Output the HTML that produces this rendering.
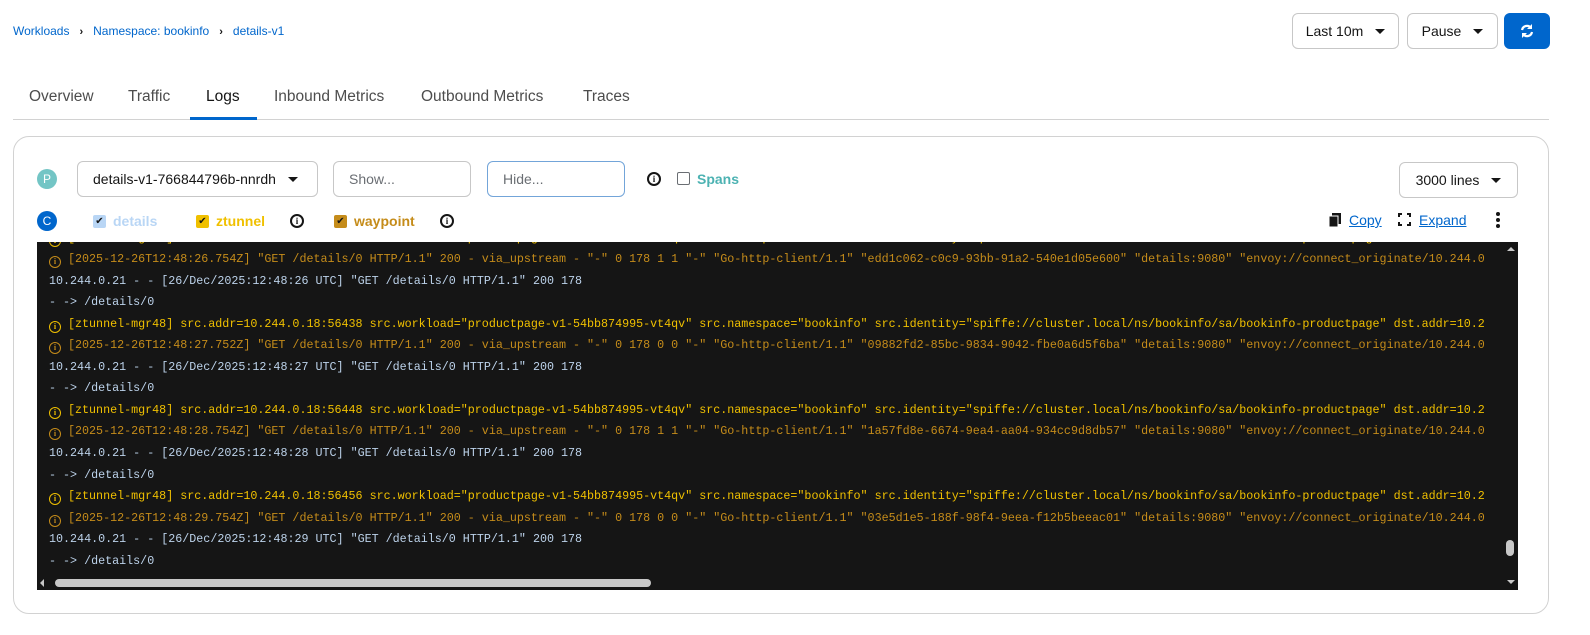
<!DOCTYPE html>
<html><head><meta charset="utf-8"><style>
*{box-sizing:border-box;margin:0;padding:0}
body{width:1590px;height:635px;background:#fff;font-family:"Liberation Sans",sans-serif;position:relative;overflow:hidden;color:#151515}
.abs{position:absolute}
.bc{top:24px;left:13px;font-size:12px;color:#0066cc}
.bc span.s{color:#151515;margin:0 10px;font-size:11px;font-weight:bold}
.btn{position:absolute;border:1px solid #c7c7c7;border-radius:6px;background:#fff;font-size:14px;display:flex;align-items:center;justify-content:center;color:#151515}
.caret{display:inline-block;width:0;height:0;border-left:5px solid transparent;border-right:5px solid transparent;border-top:5px solid #151515;margin-left:12px}
.tabs{top:87px;left:13px;width:1536px;height:33px;border-bottom:1px solid #d2d2d2;font-size:15.5px;color:#4d4d4d}
.tab{position:absolute;top:1px}
.card{top:136px;left:13px;width:1536px;height:478px;border:1px solid #d2d2d2;border-radius:16px}
.badge{position:absolute;width:20px;height:20px;border-radius:50%;color:#fff;font-size:12px;display:flex;align-items:center;justify-content:center}
.inp{position:absolute;border:1px solid #c7c7c7;border-radius:6px;font-size:14px;color:#6a6e73;padding-left:15px;display:flex;align-items:center}
.info{position:absolute;width:14px;height:14px;border:2px solid #151515;border-radius:50%;font-size:9px;font-weight:bold;display:flex;align-items:center;justify-content:center;font-family:"Liberation Serif",serif}
.cb{position:absolute;width:13px;height:13px;border-radius:2px;color:#151515;font-size:10px;display:flex;align-items:center;justify-content:center}
.log{top:242px;left:37px;width:1481px;height:348px;background:#151515;overflow:hidden;font-family:"Liberation Mono",monospace;font-size:11.7px;white-space:pre}
.l{position:absolute;left:12px;height:21.6px;line-height:21.6px}
.l .i{display:inline-block;width:12px;height:12px;border:1.5px solid currentColor;border-radius:50%;font-size:8px;line-height:9px;text-align:center;margin-right:7px;vertical-align:-2px;font-family:"Liberation Serif",serif;font-weight:bold}
.z{color:#f0c000}.w{color:#c58c1a}.d{color:#bcd2ea}
</style></head><body>
<div class="abs bc">Workloads<span class="s">›</span>Namespace: bookinfo<span class="s">›</span>details-v1</div>
<div class="btn" style="left:1292px;top:13px;width:107px;height:36px">Last 10m<span class="caret"></span></div>
<div class="btn" style="left:1407px;top:13px;width:91px;height:36px">Pause<span class="caret"></span></div>
<div class="btn" style="left:1504px;top:13px;width:46px;height:36px;background:#0066cc;border-color:#0066cc">
<svg width="16" height="16" viewBox="0 0 16 16"><path d="M3 7a5 5 0 0 1 9-2" stroke="#fff" stroke-width="2.2" fill="none"/><path d="M13 1v5h-5z" fill="#fff"/><path d="M13 9a5 5 0 0 1-9 2" stroke="#fff" stroke-width="2.2" fill="none"/><path d="M3 15v-5h5z" fill="#fff"/></svg></div>
<div class="abs tabs">
<div class="tab" style="left:16px">Overview</div>
<div class="tab" style="left:115px">Traffic</div>
<div class="tab" style="left:193px;color:#151515">Logs</div>
<div class="abs" style="left:177px;top:30px;width:67px;height:3px;background:#0066cc"></div>
<div class="tab" style="left:261px">Inbound Metrics</div>
<div class="tab" style="left:408px">Outbound Metrics</div>
<div class="tab" style="left:570px">Traces</div>
</div>
<div class="abs card"></div>
<div class="badge" style="left:37px;top:169px;background:#73c5c5">P</div>
<div class="btn" style="left:77px;top:161px;width:241px;height:36px;justify-content:flex-start;padding-left:15px">details-v1-766844796b-nnrdh<span class="caret"></span></div>
<div class="inp" style="left:333px;top:161px;width:138px;height:36px">Show...</div>
<div class="inp" style="left:487px;top:161px;width:138px;height:36px;border-color:#73a5d9">Hide...</div>
<div class="info" style="left:647px;top:172px">i</div>
<div class="cb" style="left:677px;top:172px;border:1px solid #6a6e73"></div>
<div class="abs" style="left:697px;top:171px;font-size:14px;font-weight:bold;color:#4cb2b2">Spans</div>
<div class="btn" style="left:1399px;top:162px;width:119px;height:36px">3000 lines<span class="caret"></span></div>
<div class="badge" style="left:37px;top:211px;background:#0066cc">C</div>
<div class="cb" style="left:93px;top:215px;background:#b9d6f5">✔</div>
<div class="abs" style="left:113px;top:213px;font-size:14px;font-weight:bold;color:#b9d6f5">details</div>
<div class="cb" style="left:196px;top:215px;background:#f0c000">✔</div>
<div class="abs" style="left:216px;top:213px;font-size:14px;font-weight:bold;color:#f0c000">ztunnel</div>
<div class="info" style="left:290px;top:214px">i</div>
<div class="cb" style="left:334px;top:215px;background:#c58c1a">✔</div>
<div class="abs" style="left:354px;top:213px;font-size:14px;font-weight:bold;color:#c58c1a">waypoint</div>
<div class="info" style="left:440px;top:214px">i</div>
<svg class="abs" style="left:1329px;top:213px" width="12" height="14" viewBox="0 0 12 14"><rect x="3" y="0" width="9" height="11" fill="#151515"/><rect x="0" y="3" width="9" height="11" fill="#151515" stroke="#fff" stroke-width="1"/></svg>
<div class="abs" style="left:1349px;top:212px;font-size:14px;color:#0066cc;text-decoration:underline">Copy</div>
<svg class="abs" style="left:1398px;top:213px" width="13" height="13" viewBox="0 0 13 13" fill="none" stroke="#151515" stroke-width="2"><path d="M1 4V1h3M9 1h3v3M12 9v3H9M4 12H1V9"/></svg>
<div class="abs" style="left:1419px;top:212px;font-size:14px;color:#0066cc;text-decoration:underline">Expand</div>
<svg class="abs" style="left:1496px;top:212px" width="4" height="16"><circle cx="2" cy="2" r="2" fill="#151515"/><circle cx="2" cy="8" r="2" fill="#151515"/><circle cx="2" cy="14" r="2" fill="#151515"/></svg>
<div class="abs log">
<div class="l z" style="top:-14px"><span class="i">i</span>[ztunnel-mgr48] src.addr=10.244.0.18:56430 src.workload="productpage-v1-54bb874995-vt4qv" src.namespace="bookinfo" src.identity="spiffe://cluster.local/ns/bookinfo/sa/bookinfo-productpage" dst.addr=10.2</div>
<div class="l w" style="top:7px"><span class="i">i</span>[2025-12-26T12:48:26.754Z] "GET /details/0 HTTP/1.1" 200 - via_upstream - "-" 0 178 1 1 "-" "Go-http-client/1.1" "edd1c062-c0c9-93bb-91a2-540e1d05e600" "details:9080" "envoy://connect_originate/10.244.0</div>
<div class="l d" style="top:29px">10.244.0.21 - - [26/Dec/2025:12:48:26 UTC] "GET /details/0 HTTP/1.1" 200 178</div>
<div class="l d" style="top:50px">- -> /details/0</div>
<div class="l z" style="top:72px"><span class="i">i</span>[ztunnel-mgr48] src.addr=10.244.0.18:56438 src.workload="productpage-v1-54bb874995-vt4qv" src.namespace="bookinfo" src.identity="spiffe://cluster.local/ns/bookinfo/sa/bookinfo-productpage" dst.addr=10.2</div>
<div class="l w" style="top:93px"><span class="i">i</span>[2025-12-26T12:48:27.752Z] "GET /details/0 HTTP/1.1" 200 - via_upstream - "-" 0 178 0 0 "-" "Go-http-client/1.1" "09882fd2-85bc-9834-9042-fbe0a6d5f6ba" "details:9080" "envoy://connect_originate/10.244.0</div>
<div class="l d" style="top:115px">10.244.0.21 - - [26/Dec/2025:12:48:27 UTC] "GET /details/0 HTTP/1.1" 200 178</div>
<div class="l d" style="top:136px">- -> /details/0</div>
<div class="l z" style="top:158px"><span class="i">i</span>[ztunnel-mgr48] src.addr=10.244.0.18:56448 src.workload="productpage-v1-54bb874995-vt4qv" src.namespace="bookinfo" src.identity="spiffe://cluster.local/ns/bookinfo/sa/bookinfo-productpage" dst.addr=10.2</div>
<div class="l w" style="top:179px"><span class="i">i</span>[2025-12-26T12:48:28.754Z] "GET /details/0 HTTP/1.1" 200 - via_upstream - "-" 0 178 1 1 "-" "Go-http-client/1.1" "1a57fd8e-6674-9ea4-aa04-934cc9d8db57" "details:9080" "envoy://connect_originate/10.244.0</div>
<div class="l d" style="top:201px">10.244.0.21 - - [26/Dec/2025:12:48:28 UTC] "GET /details/0 HTTP/1.1" 200 178</div>
<div class="l d" style="top:223px">- -> /details/0</div>
<div class="l z" style="top:244px"><span class="i">i</span>[ztunnel-mgr48] src.addr=10.244.0.18:56456 src.workload="productpage-v1-54bb874995-vt4qv" src.namespace="bookinfo" src.identity="spiffe://cluster.local/ns/bookinfo/sa/bookinfo-productpage" dst.addr=10.2</div>
<div class="l w" style="top:266px"><span class="i">i</span>[2025-12-26T12:48:29.754Z] "GET /details/0 HTTP/1.1" 200 - via_upstream - "-" 0 178 0 0 "-" "Go-http-client/1.1" "03e5d1e5-188f-98f4-9eea-f12b5beeac01" "details:9080" "envoy://connect_originate/10.244.0</div>
<div class="l d" style="top:287px">10.244.0.21 - - [26/Dec/2025:12:48:29 UTC] "GET /details/0 HTTP/1.1" 200 178</div>
<div class="l d" style="top:309px">- -> /details/0</div>
<div class="abs" style="left:0;top:334px;width:1481px;height:14px;background:#151515"></div>
<div class="abs" style="left:18px;top:337px;width:596px;height:8px;border-radius:4px;background:#c8c8c8"></div>
<div class="abs" style="left:3px;top:337px;width:0;height:0;border-top:4px solid transparent;border-bottom:4px solid transparent;border-right:4px solid #c8c8c8"></div>
<div class="abs" style="left:1470px;top:338px;width:0;height:0;border-left:4px solid transparent;border-right:4px solid transparent;border-top:4px solid #c8c8c8"></div>
<div class="abs" style="left:1470px;top:5px;width:0;height:0;border-left:4px solid transparent;border-right:4px solid transparent;border-bottom:4px solid #c8c8c8"></div>
<div class="abs" style="left:1469px;top:298px;width:8px;height:16px;border-radius:4px;background:#c8c8c8"></div>
</div>
</body></html>
